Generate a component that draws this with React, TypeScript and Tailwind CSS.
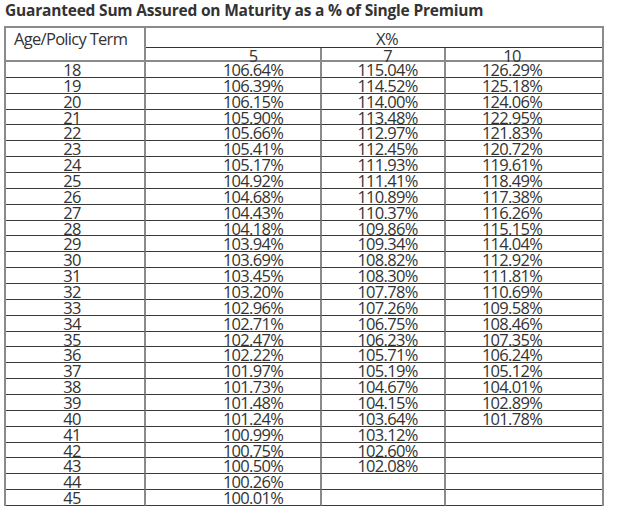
const rows: [number, string, string, string][] = [
  [18, '106.64%', '115.04%', '126.29%'],
  [19, '106.39%', '114.52%', '125.18%'],
  [20, '106.15%', '114.00%', '124.06%'],
  [21, '105.90%', '113.48%', '122.95%'],
  [22, '105.66%', '112.97%', '121.83%'],
  [23, '105.41%', '112.45%', '120.72%'],
  [24, '105.17%', '111.93%', '119.61%'],
  [25, '104.92%', '111.41%', '118.49%'],
  [26, '104.68%', '110.89%', '117.38%'],
  [27, '104.43%', '110.37%', '116.26%'],
  [28, '104.18%', '109.86%', '115.15%'],
  [29, '103.94%', '109.34%', '114.04%'],
  [30, '103.69%', '108.82%', '112.92%'],
  [31, '103.45%', '108.30%', '111.81%'],
  [32, '103.20%', '107.78%', '110.69%'],
  [33, '102.96%', '107.26%', '109.58%'],
  [34, '102.71%', '106.75%', '108.46%'],
  [35, '102.47%', '106.23%', '107.35%'],
  [36, '102.22%', '105.71%', '106.24%'],
  [37, '101.97%', '105.19%', '105.12%'],
  [38, '101.73%', '104.67%', '104.01%'],
  [39, '101.48%', '104.15%', '102.89%'],
  [40, '101.24%', '103.64%', '101.78%'],
  [41, '100.99%', '103.12%', ''],
  [42, '100.75%', '102.60%', ''],
  [43, '100.50%', '102.08%', ''],
  [44, '100.26%', '', ''],
  [45, '100.01%', '', ''],
];

const cell = 'border-b border-b-[#3a3a3a] leading-[15px] text-center';

export default function App() {
  return (
    <div className="w-[632px] h-[506px] overflow-hidden bg-white text-[#333]">
      <h1 className="pl-[5px] h-[26px] font-['Open_Sans',sans-serif] font-bold text-[15.5px] tracking-[-0.2px] leading-[20px]">
        Guaranteed Sum Assured on Maturity as a % of Single Premium
      </h1>
      <div className="ml-[4px] w-[600px] border-t-2 border-x-2 border-[#8a8a8a] grid grid-cols-[140px_176px_124px_156px] grid-rows-[20px_14px_repeat(28,15.86px)] font-['Open_Sans',sans-serif] font-normal text-[16.5px] tracking-[-0.7px]">
        <div className="row-span-2 border-r-2 border-r-[#8a8a8a] border-b-2 border-b-[#8a8a8a] pl-[8px] pt-[3px] leading-[15px]">
          Age/Policy Term
        </div>
        <div className="col-span-3 border-b border-b-[#333] pl-[26px] pt-[3px] leading-[15px] text-center">X%</div>
        <div className="border-r-2 border-r-[#8a8a8a] border-b-2 border-b-[#8a8a8a] pl-[40px] leading-[15px] text-center">5</div>
        <div className="border-r-2 border-r-[#8a8a8a] border-b-2 border-b-[#8a8a8a] pl-[9px] leading-[15px] text-center">7</div>
        <div className="border-b-2 border-b-[#8a8a8a] pr-[24px] leading-[15px] text-center">10</div>
        {rows.map(([age, a, b, c]) => (
          <div key={age} className="contents">
            <div className={`${cell} border-r-2 border-r-[#8a8a8a] pr-[6px]`}>{age}</div>
            <div className={`${cell} border-r-2 border-r-[#8a8a8a] pl-[40px]`}>{a}</div>
            <div className={`${cell} border-r-2 border-r-[#8a8a8a] pl-[9px]`}>{b}</div>
            <div className={`${cell} pr-[24px]`}>{c}</div>
          </div>
        ))}
      </div>
    </div>
  );
}
